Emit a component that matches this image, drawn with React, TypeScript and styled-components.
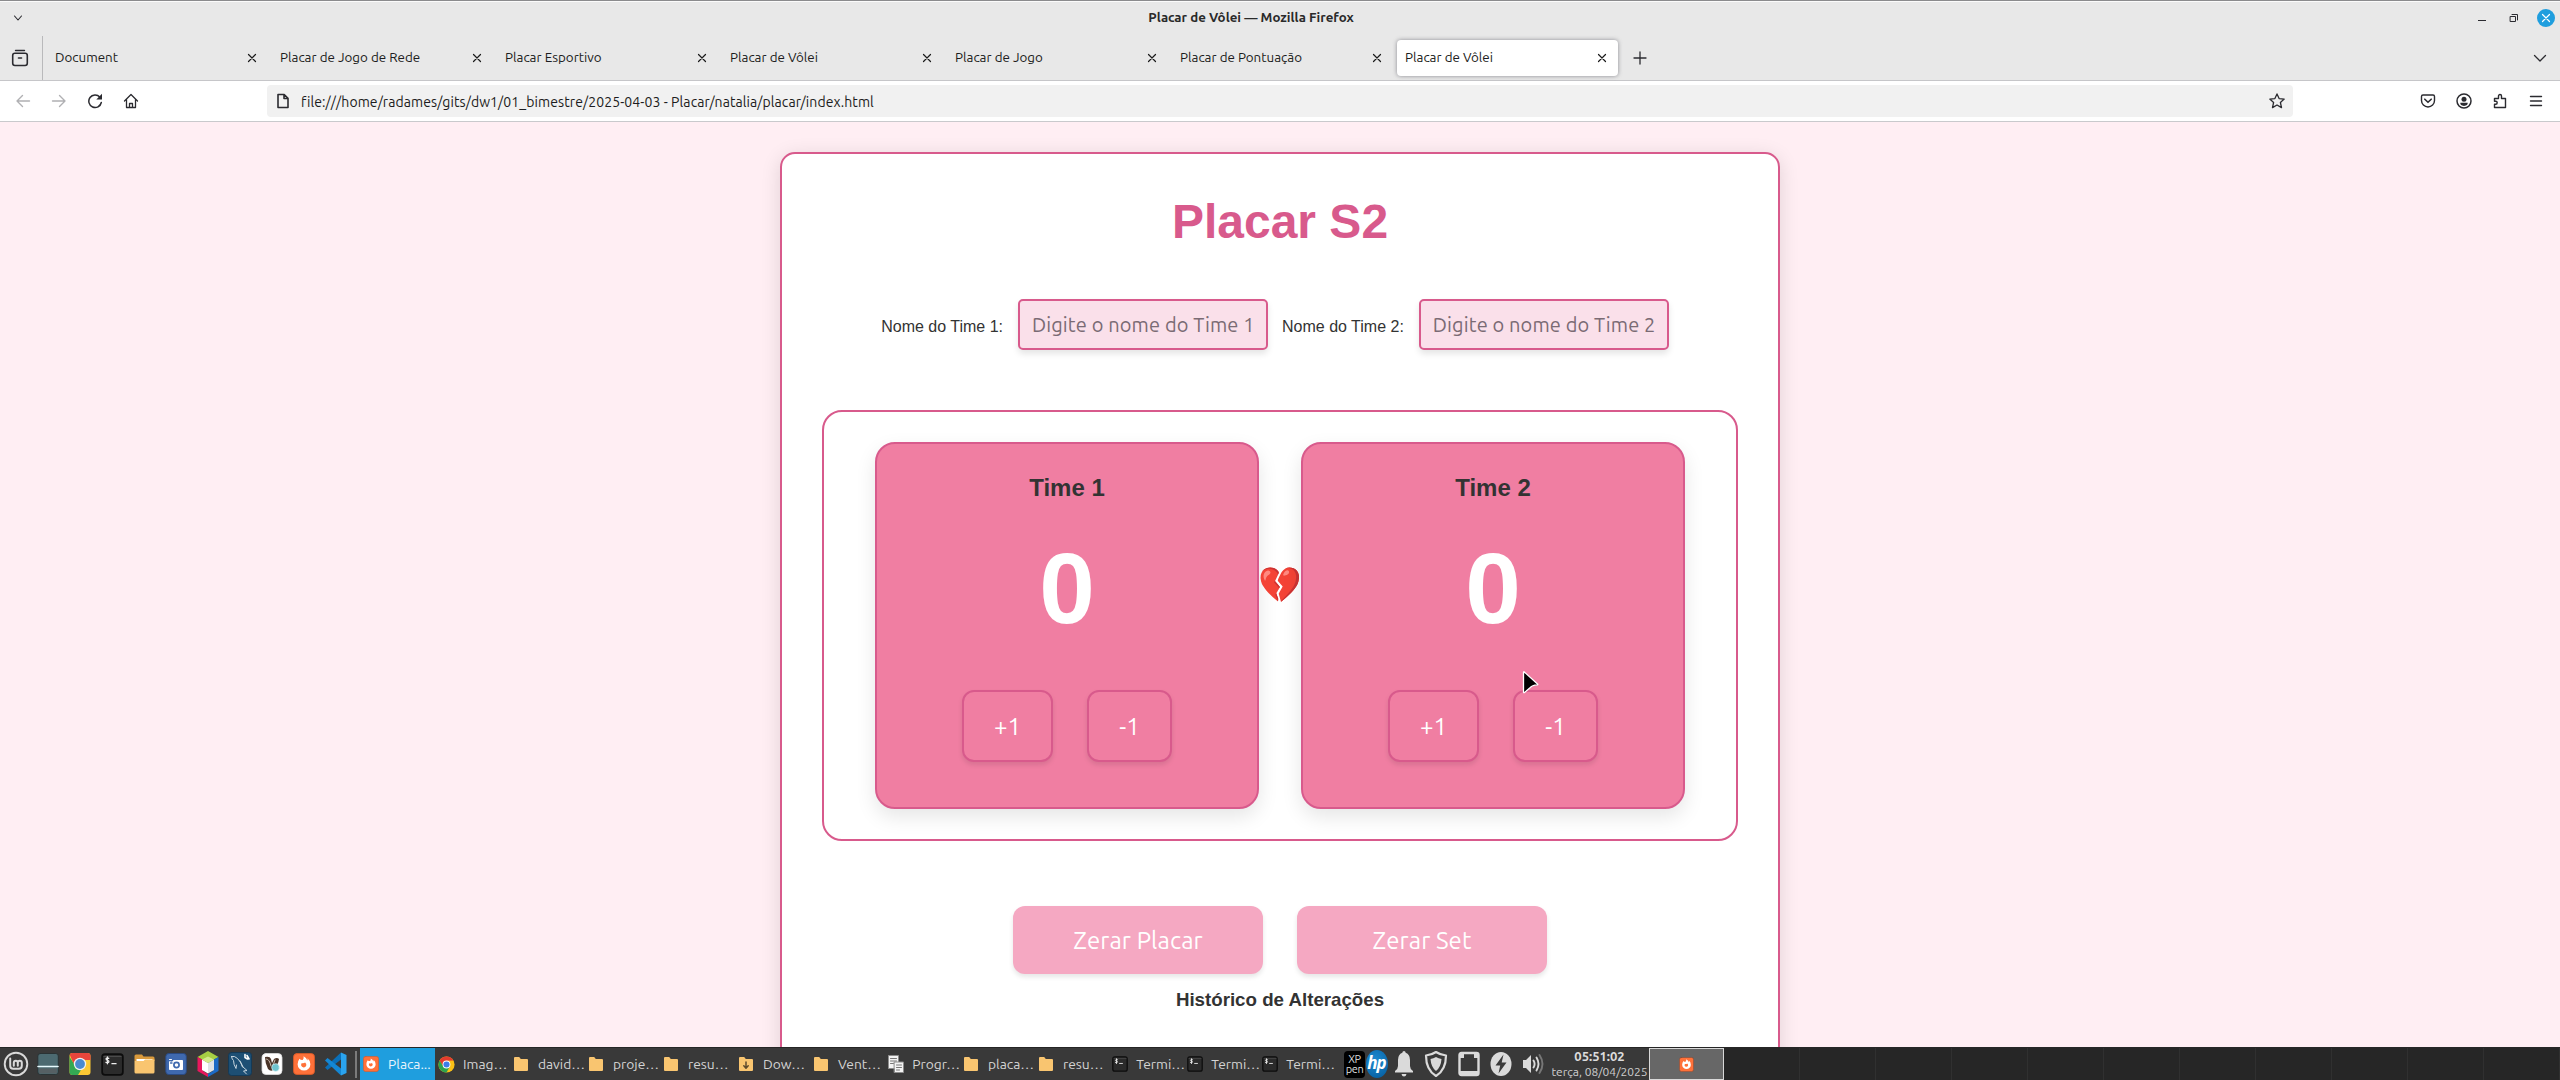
import React, { useState } from "react";
import styled, { createGlobalStyle } from "styled-components";

const ui = `"Ubuntu", "Noto Sans", sans-serif`;
const arial = `"Liberation Sans", Arial, sans-serif`;
const rose = "#d85a8c";

const GlobalStyle = createGlobalStyle`
  * { box-sizing: border-box; }
  body { margin: 0; overflow: hidden; }
  button, input { font: inherit; margin: 0; }
`;

/* ---------- Window ---------- */

const Screen = styled.div`
  display: flex;
  flex-direction: column;
  width: 2560px;
  height: 1080px;
  overflow: hidden;
  font-family: ${ui};
  color: #1c1c20;
  border-top: 1px solid #8b8b8d;
`;

const TitleBar = styled.header`
  display: grid;
  grid-template-columns: 36px 1fr 94px;
  align-items: center;
  height: 35px;
  flex: none;
  padding-bottom: 2px;
  background: #e8e8e8;
  border-top: 1px solid #fbfbfb;
  color: #2a2a2a;
`;

const MenuHandle = styled.span`
  display: flex;
  justify-content: center;
`;

const WindowTitle = styled.h1`
  margin: 0;
  text-align: center;
  font-size: 13.3px;
  font-weight: 600;
  line-height: 18px;
`;

const WindowControls = styled.div`
  display: flex;
  align-items: center;
  gap: 14px;
  padding-left: 7px;
`;

const Control = styled.span<{ $close?: boolean }>`
  display: flex;
  align-items: center;
  justify-content: center;
  width: 18px;
  height: 18px;
  border-radius: 50%;
  background: ${(p) => (p.$close ? "#1f9ede" : "transparent")};
`;

const TabStrip = styled.nav`
  display: flex;
  align-items: center;
  height: 45px;
  flex: none;
  background: #e8e8e8;
  border-bottom: 1px solid #c6c6c9;
`;

const FirefoxView = styled.div`
  display: flex;
  align-items: center;
  justify-content: center;
  align-self: stretch;
  width: 43px;
  padding-right: 2px;
  border-right: 1px solid #b9b9bb;
`;

const Tab = styled.div<{ $active?: boolean }>`
  display: flex;
  align-items: center;
  justify-content: space-between;
  width: 221px;
  height: 36px;
  margin: 0 2px;
  padding: 0 11px 0 8px;
  border-radius: 4px;
  font-size: 13.4px;
  line-height: 18px;
  background: ${(p) => (p.$active ? "#fff" : "transparent")};
  box-shadow: ${(p) => (p.$active ? "0 0 4px rgba(100, 100, 110, 0.7)" : "none")};
`;

const Tabs = styled.div`
  display: flex;
  padding-left: 2px;
`;

const NewTab = styled.span`
  display: flex;
  margin-left: 13px;
`;

const TabList = styled.span`
  display: flex;
  margin-left: auto;
  margin-right: 13px;
`;

const Toolbar = styled.div`
  display: flex;
  align-items: center;
  height: 41px;
  flex: none;
  background: #fff;
  border-bottom: 1px solid #c9c9cc;
`;

const NavButtons = styled.div`
  display: flex;
  align-items: center;
  gap: 20px;
  width: 267px;
  padding-left: 15px;
`;

const AddressBar = styled.div`
  display: flex;
  align-items: center;
  width: 2026px;
  height: 32px;
  padding: 0 8px;
  border-radius: 4px;
  background: #f1f1f1;
`;

const Address = styled.span`
  flex: 1;
  margin-left: 10px;
  padding-top: 1px;
  font-size: 14px;
  line-height: 20px;
  letter-spacing: 0.09px;
`;

const ToolbarActions = styled.div`
  display: flex;
  align-items: center;
  gap: 20px;
  margin-left: 127px;
`;

/* ---------- Page ---------- */

const Page = styled.main`
  flex: 1;
  min-height: 0;
  overflow: hidden;
  padding-top: 30px;
  background: #ffeef3;
  font-family: ${arial};
  color: #333;
`;

const Board = styled.section`
  width: 1000px;
  height: 1100px;
  margin: 0 auto;
  padding: 40px;
  border: 2px solid ${rose};
  border-radius: 15px;
  background: #fff;
  box-shadow: 0 4px 20px rgba(0, 0, 0, 0.12);
`;

const Heading = styled.h1`
  margin: 0 0 49px;
  text-align: center;
  font-size: 48px;
  line-height: 56px;
  color: ${rose};
`;

const NamesRow = styled.div`
  display: flex;
  align-items: baseline;
  justify-content: center;
  gap: 14px;
  padding-right: 10px;
`;

const Field = styled.label`
  display: flex;
  align-items: baseline;
  gap: 15px;
  font-size: 16px;
  line-height: 20px;
`;

const NameInput = styled.input`
  width: 250px;
  height: 51px;
  padding: 0 12px;
  border: 2px solid ${rose};
  border-radius: 5px;
  outline: none;
  background: #fae0ea;
  box-shadow: 0 4px 6px rgba(0, 0, 0, 0.1);
  font-family: ${ui};
  font-size: 20px;
  letter-spacing: 0.13px;
  color: #333;
  &::placeholder {
    color: #7a6b74;
    opacity: 1;
  }
`;

const Scoreboard = styled.div`
  display: flex;
  align-items: center;
  justify-content: center;
  height: 431px;
  margin-top: 60px;
  border: 2px solid ${rose};
  border-radius: 20px;
`;

const TeamCard = styled.article`
  display: flex;
  flex-direction: column;
  align-items: center;
  width: 384px;
  height: 367px;
  padding-top: 30px;
  border: 2px solid ${rose};
  border-radius: 20px;
  background: #f07ea2;
  box-shadow: 0 8px 20px rgba(0, 0, 0, 0.1);
`;

const TeamName = styled.h2`
  margin: 0;
  font-size: 24px;
  line-height: 28px;
`;

const Score = styled.div`
  margin: 31px 0 47px;
  font-size: 100px;
  font-weight: 700;
  line-height: 110px;
  color: #fff;
`;

const ScoreActions = styled.div`
  display: flex;
  gap: 34px;
`;

const ScoreButton = styled.button<{ $width: number }>`
  width: ${(p) => p.$width}px;
  height: 72px;
  padding: 0;
  border: 2px solid ${rose};
  border-radius: 12px;
  background: #f07ea2;
  box-shadow: 0 3px 5px rgba(0, 0, 0, 0.1);
  font-family: ${ui};
  font-size: 24px;
  color: #fff;
`;

const Heart = styled.div`
  display: flex;
  justify-content: center;
  width: 42px;
  margin-top: -79px;
  font-family: "Noto Color Emoji", sans-serif;
  font-size: 35px;
  line-height: 42px;
  white-space: nowrap;
`;

const ResetRow = styled.div`
  display: flex;
  justify-content: center;
  gap: 34px;
  margin-top: 65px;
`;

const ResetButton = styled.button`
  width: 250px;
  height: 68px;
  border: none;
  border-radius: 12px;
  background: #f5a8c2;
  box-shadow: 0 3px 5px rgba(0, 0, 0, 0.1);
  font-family: ${ui};
  font-size: 24px;
  letter-spacing: 0.1px;
  color: #fff;
`;

const HistoryTitle = styled.h3`
  margin: 15px 0 0;
  text-align: center;
  font-size: 18.72px;
  line-height: 22px;
`;

/* ---------- Taskbar ---------- */

const Taskbar = styled.footer`
  display: flex;
  height: 33px;
  flex: none;
  border-top: 1px solid #262626;
  background: #262626;
`;

const Panel = styled.div`
  display: flex;
  align-items: center;
  width: 1650px;
  background: #393939;
`;

const Launchers = styled.div`
  display: flex;
  align-items: center;
  width: 360px;
  height: 100%;
`;

const Launcher = styled.span`
  display: flex;
  justify-content: center;
  width: 32px;
`;

const Divider = styled.i`
  width: 2px;
  height: 27px;
  margin-left: 3px;
  background: #7b7b7b;
`;

const Task = styled.div<{ $active?: boolean }>`
  display: flex;
  align-items: center;
  width: 75px;
  height: 100%;
  padding-left: 2px;
  font-size: 13.8px;
  line-height: 20px;
  white-space: nowrap;
  color: ${(p) => (p.$active ? "#e9f4fb" : "#d4d4d4")};
  background: ${(p) => (p.$active ? "#1f9ede" : "transparent")};
`;

const TaskIcon = styled.span`
  display: flex;
  justify-content: center;
  width: 18px;
  margin-right: 8px;
`;

const Tray = styled.div`
  display: flex;
  align-items: center;
  width: 215px;
  padding-left: 9px;
`;

const TrayItem = styled.span<{ $width: number }>`
  display: flex;
  justify-content: center;
  width: ${(p) => p.$width}px;
`;

const XpPen = styled.span`
  display: flex;
  flex-direction: column;
  align-items: center;
  justify-content: center;
  width: 21px;
  height: 27px;
  border-radius: 4px;
  background: #000;
  font-size: 11px;
  line-height: 10px;
  letter-spacing: -0.4px;
  color: #ddd;
`;

const HpLogo = styled.span`
  display: flex;
  align-items: center;
  justify-content: center;
  width: 22px;
  height: 28px;
  padding-bottom: 3px;
  border-radius: 50%;
  background: radial-gradient(circle at 40% 35%, #1c8ad0, #045a9c);
  font: italic 700 17px/20px "Open Sans", sans-serif;
  letter-spacing: -1px;
  color: #fff;
`;

const Clock = styled.time`
  width: 99px;
  text-align: center;
  white-space: nowrap;
  font-size: 12px;
  line-height: 15px;
  color: #cfcfcf;
`;

const ClockTime = styled.strong`
  display: block;
  font-size: 13px;
  color: #dcdcdc;
`;

const Workspaces = styled.div`
  display: flex;
  flex: 1;
`;

const Workspace = styled.div<{ $active?: boolean }>`
  display: flex;
  align-items: center;
  justify-content: center;
  width: ${(p) => (p.$active ? 75 : 76)}px;
  flex: none;
  background: ${(p) => (p.$active ? "#676767" : "transparent")};
  border: solid ${(p) => (p.$active ? "#d9d9d9" : "#303030")};
  border-width: ${(p) => (p.$active ? "1px" : "0 1px 0 0")};
`;

const Pointer = styled.svg`
  position: absolute;
  left: 1521px;
  top: 670px;
`;

/* ---------- Icons ---------- */

type IconProps = { size?: number; color?: string; children: React.ReactNode; w?: number; box?: string };
const Icon = ({ size = 16, w, box, color = "#2b2b30", children }: IconProps) => (
  <svg width={w ?? size} height={size} viewBox={box ?? `0 0 ${w ?? size} ${size}`} fill="none" stroke={color} strokeWidth={1.4} strokeLinecap="round" strokeLinejoin="round">
    {children}
  </svg>
);

const Cross = () => <Icon size={10} color="#1a1a1a"><path d="M1.5 1.5l7 7M8.5 1.5l-7 7" strokeWidth={1.2} /></Icon>;

const Folder = ({ down }: { down?: boolean }) => (
  <Icon size={16} w={14} color="none">
    <path d="M0 2q0-1 1-1h4.2l1.6 2H13q1 0 1 1v10q0 1-1 1H1q-1 0-1-1z" fill="#f9c570" />
    {down && <path d="M7 6v6M4.8 9.8L7 12.2l2.2-2.4" stroke="#5d4a2c" strokeWidth={1.5} />}
  </Icon>
);

const Terminal = ({ size = 16 }: { size?: number }) => (
  <Icon size={size} box="0 0 20 20">
    <rect x={1} y={1} width={18} height={18} rx={2.5} fill="#2b2b2b" stroke="#0c0c0c" strokeWidth={1.5} />
    <path d="M2.5 3h15" stroke="#4b4b4b" strokeWidth={1} />
    <path d="M6.8 4.6q-2.4-.8-2.4.6 0 1 1.3 1.2 1.3.3 1.2 1.3-.3 1.2-2.6.4M5.6 3.4v6M9.5 9.3h3.6" stroke="#eee" strokeWidth={1.1} />
  </Icon>
);

const Firefox = ({ size = 16, light }: { size?: number; light?: boolean }) => (
  <Icon size={size} box="0 0 20 20">
    <rect x={0.5} y={0.5} width={19} height={19} rx={3} fill="#ff7139" stroke={light ? "#7a4a3a" : "#d95a28"} strokeWidth={0.8} />
    <path d="M6 5.2q-1.8 2-1.8 5a5.8 5.8 0 0 0 11.6 0q0-3.3-2.7-5.4.4 1.2 0 2.1Q12.2 4.2 9.6 3q.5 1.9-.8 3.3Q6.8 6.5 6 5.2z" fill="#fff" stroke="none" />
    <path d="M8 9.2q1.5.6 3-.5 1.6 1.2 1 3a2.5 2.5 0 0 1-4.6-.3q-.2-1.2.6-2.2z" fill="#ff7139" stroke="none" />
  </Icon>
);

const ChromeMark = () => (
  <Icon size={17} box="0 0 20 20" color="none">
    <circle cx={10} cy={10} r={9.5} fill="#fbc116" />
    <path d="M1.8 5.25A9.5 9.5 0 0 1 18.2 5.25L10 5.5 6 12.3z" fill="#e33b2e" />
    <path d="M1.8 5.25A9.5 9.5 0 0 0 10 19.5l4-7.2-8-.2z" fill="#2da44e" />
    <circle cx={10} cy={10} r={4.6} fill="#fff" />
    <circle cx={10} cy={10} r={3.6} fill="#3d7de8" />
  </Icon>
);

const ChromeSquare = () => (
  <Icon size={22} box="0 0 22 22" color="none">
    <clipPath id="chrome-sq"><rect x={0.5} y={0} width={21} height={22} rx={3} /></clipPath>
    <g clipPath="url(#chrome-sq)">
      <path d="M0 0h22v22H0z" fill="#fcc934" />
      <path d="M0 0h22v7H11l-5 7z" fill="#e8453c" />
      <path d="M0 3l7 11 5 3-3 5H0z" fill="#34a853" />
    </g>
    <circle cx={11} cy={11} r={6.2} fill="#f3f3f3" />
    <circle cx={11} cy={11} r={4.9} fill="#4a8ad0" />
  </Icon>
);

const launchers: React.ReactNode[] = [
  <Icon size={26} color="#d9d9d9">
    <circle cx={13} cy={13} r={11.3} strokeWidth={1.9} />
    <path d="M7.2 7.5v7.3q0 3 3 3h5.6q3 0 3-3v-3a2 2 0 0 0-4 0v3M14.800 11.8a2 2 0 0 0-4 0v3" strokeWidth={2} />
  </Icon>,
  <Icon size={22}>
    <rect x={0.8} y={0.5} width={20.5} height={21} rx={2.5} fill="#4c6a71" stroke="#2a3335" strokeWidth={1} />
    <path d="M1 13.5h20" stroke="#e9fbff" strokeWidth={1.6} />
    <path d="M2 15.5h18v4q0 1-1 1H3q-1 0-1-1z" fill="#566064" stroke="none" />
  </Icon>,
  <ChromeSquare />,
  <Terminal size={23} />,
  <Icon size={20} w={21} color="none">
    <path d="M.5 2q0-1.500 1.500-1.500h6l1.500 2H19q1.500 0 1.500 1.500v3H.5z" fill="#d99a3c" />
    <path d="M2.500 5h16v4h-16z" fill="#fff" />
    <path d="M.5 7h9l1.500-1.500h9.500V18q0 1.500-1.500 1.500H2Q.5 19.500.5 18z" fill="#f9c570" />
  </Icon>,
  <Icon size={22}>
    <rect x={0.8} y={0.5} width={20.5} height={21} rx={3} fill="#3f69ae" stroke="#2b4a80" strokeWidth={1} />
    <path d="M4.500 6.500h2M4.500 9v7.500h13V7.500h-9l-1 1.500z" fill="#fff" stroke="#fff" strokeWidth={1} />
    <circle cx={11.500} cy={12} r={2.600} stroke="#3f69ae" strokeWidth={1.700} />
    <path d="M5.500 10h1.500" stroke="#3f69ae" />
  </Icon>,
  <Icon size={26} w={22} color="none">
    <path d="M11 0l10.500 6L11 12 .5 6z" fill="#a7cf43" />
    <path d="M.5 6L6 9v11l5 3v3L.5 20z" fill="#e8175d" />
    <path d="M21.500 6L16 9v11l-5 3v3l10.500-6z" fill="#1b6ac6" />
    <path d="M5 8.500l6 3.500v10.500L5 19z" fill="#fff" />
    <path d="M17 8.500L11 12v10.500l6-3.500z" fill="#dfe3e6" />
    <path d="M11 5.500l6 3-6 3.500-6-3.500z" fill="#d4ea8c" />
  </Icon>,
  <Icon size={24} color="#c8d6df">
    <rect x={0.5} y={0.5} width={23} height={23} rx={3} fill="#1d4f74" stroke="#143a57" strokeWidth={1} />
    <path d="M3.500 4.500q3-1 6 2 4 4 5.500 8.500l4 3.500-3.500.5 3 3M3.500 4.500q.5 3 2 4 0 4 2.500 8l.5-3.500M12 9l2.500 6" strokeWidth={1} />
    <path d="M17 2.500v3l2.500 1.500M19 3.500l2 3.500" stroke="#fff" strokeWidth={1.6} />
  </Icon>,
  <Icon size={22}>
    <rect x={1} y={0.5} width={20} height={21} rx={4} fill="#fff" stroke="#ddd" strokeWidth={0.8} />
    <path d="M4 4q5-1 6 2l1 4 2-4q3-2 5 0-1 7-5 10.500-3 2.500-6-.5Q4 10 4 4z" fill="#4a3428" stroke="none" />
    <path d="M5.500 6q3 0 4.500 7M14 7q-2 4-2 7" stroke="#cdbcb0" strokeWidth={1} />
    <circle cx={14.5} cy={14.5} r={3.8} fill="#6fc4cf" stroke="#d8f0f3" strokeWidth={0.7} />
  </Icon>,
  <Firefox size={22} />,
  <Icon size={24} color="none">
    <path d="M17 .5l5.500 2.500v18L17 23.500z" fill="#2aa3ee" />
    <path d="M17 .5L1 15.500l2.500 2.500L17 7.500z" fill="#0a6fb8" />
    <path d="M17 23.500L1 8.500 3.500 6 17 16.500z" fill="#1487d4" />
  </Icon>,
];

const tasks: { label: string; icon: React.ReactNode }[] = [
  { label: "Placa...", icon: <Firefox size={16} /> },
  { label: "Imag…", icon: <ChromeMark /> },
  { label: "david…", icon: <Folder /> },
  { label: "proje…", icon: <Folder /> },
  { label: "resu…", icon: <Folder /> },
  { label: "Dow…", icon: <Folder down /> },
  { label: "Vent…", icon: <Folder /> },
  {
    label: "Progr…",
    icon: (
      <Icon size={18} w={16}>
        <rect x={0.5} y={0.5} width={10} height={13} fill="#f3f3f3" stroke="#8c8c8c" strokeWidth={1} />
        <path d="M2.500 3.500h6M2.500 6h6M2.500 8.500h3" stroke="#777" strokeWidth={1} />
        <rect x={6.5} y={7} width={9} height={10.5} fill="#f3f3f3" stroke="#8c8c8c" strokeWidth={1} />
        <path d="M8.500 10h5M8.500 12.500h5M8.500 15h3" stroke="#777" strokeWidth={1} />
      </Icon>
    ),
  },
  { label: "placa…", icon: <Folder /> },
  { label: "resu…", icon: <Folder /> },
  { label: "Termi…", icon: <Terminal /> },
  { label: "Termi…", icon: <Terminal /> },
  { label: "Termi…", icon: <Terminal /> },
];

const tabs = ["Document", "Placar de Jogo de Rede", "Placar Esportivo", "Placar de Vôlei", "Placar de Jogo", "Placar de Pontuação", "Placar de Vôlei"];

/* ---------- Application ---------- */

function Team({ name }: { name: string }) {
  const [score, setScore] = useState(0);
  return (
    <TeamCard>
      <TeamName>{name}</TeamName>
      <Score>{score}</Score>
      <ScoreActions>
        <ScoreButton $width={91} onClick={() => setScore(score + 1)}>+1</ScoreButton>
        <ScoreButton $width={85} onClick={() => setScore(Math.max(0, score - 1))}>-1</ScoreButton>
      </ScoreActions>
    </TeamCard>
  );
}

function Browser() {
  return (
    <>
      <TitleBar>
        <MenuHandle><Icon size={10}><path d="M1.5 3L5 7l3.5-4" strokeWidth={1.1} /></Icon></MenuHandle>
        <WindowTitle>Placar de Vôlei — Mozilla Firefox</WindowTitle>
        <WindowControls>
          <Control><Icon size={10}><path d="M1 7.5h8" strokeWidth={1} strokeLinecap="butt" /></Icon></Control>
          <Control><Icon size={10}><path d="M1.5 3.5h5v5h-5zM3 1.5h5.500V7" strokeWidth={1} strokeLinejoin="miter" /></Icon></Control>
          <Control $close><Icon size={10} color="#fff"><path d="M1.5 1.5l7 7M8.5 1.5l-7 7" strokeWidth={1.2} /></Icon></Control>
        </WindowControls>
      </TitleBar>
      <TabStrip>
        <FirefoxView>
          <Icon size={18}>
            <path d="M4.500 1.500h9" />
            <rect x={1.7} y={4.2} width={14.6} height={12.3} rx={2.2} strokeWidth={1.6} />
            <path d="M7.500 9h3" strokeWidth={1.6} />
          </Icon>
        </FirefoxView>
        <Tabs>
          {tabs.map((title, i) => (
            <Tab key={i} $active={i === tabs.length - 1}>
              {title}
              <Cross />
            </Tab>
          ))}
        </Tabs>
        <NewTab><Icon size={14}><path d="M7 1v12M1 7h12" strokeWidth={1.3} /></Icon></NewTab>
        <TabList><Icon size={14}><path d="M1.500 4.500L7 10l5.500-5.500" strokeWidth={1.3} /></Icon></TabList>
      </TabStrip>
      <Toolbar>
        <NavButtons>
          <Icon color="#b0b0b3"><path d="M14.500 8H2M7.500 2.500L2 8l5.500 5.500" /></Icon>
          <Icon color="#b0b0b3"><path d="M1.500 8H14M8.500 2.500L14 8l-5.500 5.500" /></Icon>
          <Icon>
            <path d="M14.300 9.500A6.300 6.300 0 1 1 12.800 4" strokeWidth={1.5} />
            <path d="M15 .8v5.700H9.300z" fill="#2b2b30" stroke="none" />
          </Icon>
          <Icon><path d="M1.500 8L8 1.500 14.500 8M3.500 6.500v8h9v-8M6.500 14.500v-4h3v4" strokeWidth={1.3} /></Icon>
        </NavButtons>
        <AddressBar>
          <Icon><path d="M3 1.500h6.200L13 5.300v9.200H3zM9 1.500v4h4" strokeWidth={1.6} /></Icon>
          <Address>file:///home/radames/gits/dw1/01_bimestre/2025-04-03 - Placar/natalia/placar/index.html</Address>
          <Icon><path d="M8 .9l2.100 4.700 5.100.5-3.800 3.400 1.100 5.100L8 12l-4.500 2.600 1.100-5.100L.8 6.100l5.100-.5z" strokeWidth={1.3} /></Icon>
        </AddressBar>
        <ToolbarActions>
          <Icon>
            <path d="M3 2h10q1.500 0 1.500 1.500v4a6.500 6.500 0 0 1-13 0v-4Q1.500 2 3 2z" />
            <path d="M4.800 6.200L8 9.300l3.200-3.100" strokeWidth={1.6} />
          </Icon>
          <Icon>
            <circle cx={8} cy={8} r={7} strokeWidth={1.5} />
            <circle cx={8} cy={6.2} r={2.5} fill="#2b2b30" stroke="none" />
            <path d="M4.300 9.800h7.400q.3 2.700-3.700 3.200-4-.5-3.700-3.200z" fill="#2b2b30" stroke="none" />
          </Icon>
          <Icon><path d="M2.500 5.500h4V3a1.500 1.500 0 0 1 3 0v2.500h4v9h-11v-3.300h1.200a1.500 1.500 0 0 0 0-3H2.500z" strokeWidth={1.4} /></Icon>
          <Icon><path d="M2.500 3.500h11M2.500 8h11M2.500 12.500h11" /></Icon>
        </ToolbarActions>
      </Toolbar>
    </>
  );
}

export default function App() {
  return (
    <Screen>
      <GlobalStyle />
      <Browser />
      <Page>
        <Board>
          <Heading>Placar S2</Heading>
          <NamesRow>
            <Field>Nome do Time 1:<NameInput placeholder="Digite o nome do Time 1" /></Field>
            <Field>Nome do Time 2:<NameInput placeholder="Digite o nome do Time 2" /></Field>
          </NamesRow>
          <Scoreboard>
            <Team name="Time 1" />
            <Heart>💔</Heart>
            <Team name="Time 2" />
          </Scoreboard>
          <ResetRow>
            <ResetButton>Zerar Placar</ResetButton>
            <ResetButton>Zerar Set</ResetButton>
          </ResetRow>
          <HistoryTitle>Histórico de Alterações</HistoryTitle>
        </Board>
      </Page>
      <Taskbar>
        <Panel>
          <Launchers>
            {launchers.map((icon, i) => <Launcher key={i}>{icon}</Launcher>)}
            <Divider />
          </Launchers>
          {tasks.map((task, i) => (
            <Task key={i} $active={i === 0}>
              <TaskIcon>{task.icon}</TaskIcon>
              {task.label}
            </Task>
          ))}
          <Tray>
            <TrayItem $width={21}><XpPen><span>XP</span><span>pen</span></XpPen></TrayItem>
            <TrayItem $width={23}><HpLogo>hp</HpLogo></TrayItem>
            <TrayItem $width={31}>
              <Icon size={26} w={20} color="none">
                <path d="M10 0q1.500 0 1.700 1.800Q16 3.500 16 9v6q0 3 3 5v1.500H1V20q3-2 3-5V9q0-5.500 4.300-7.200Q8.500 0 10 0zM7.500 23h5q-.5 2.500-2.500 2.500T7.500 23z" fill="#dadada" />
              </Icon>
            </TrayItem>
            <TrayItem $width={34}>
              <Icon size={28} w={24} color="#dadada">
                <path d="M12 2q4.500 3 10 3.500Q22 20 12 26 2 20 2 5.500 7.500 5 12 2z" strokeWidth={2.2} />
                <path d="M12 7q2.500 1.700 5.500 2-.5 8-5.500 12-5-4-5.500-12 3-.3 5.500-2z" fill="#dadada" stroke="none" />
              </Icon>
            </TrayItem>
            <TrayItem $width={32}>
              <Icon size={26} w={22} color="#dadada">
                <path d="M3.500 2h15Q20.500 2 20.500 4v18q0 2-2 2h-15q-2 0-2-2V4q0-2 2-2z" strokeWidth={2.4} />
                <path d="M2 3h4v4H2zM16 3h4v4h-4zM2 20h18v3H2z" fill="#dadada" stroke="none" />
              </Icon>
            </TrayItem>
            <TrayItem $width={32}>
              <Icon size={26} w={22} color="none">
                <ellipse cx={11} cy={13} rx={10.5} ry={12} fill="#dadada" />
                <path d="M13.500 3.500L5.500 14.500h4.700L8.500 22.500l8-11h-4.800z" fill="#393939" />
              </Icon>
            </TrayItem>
            <TrayItem $width={32}>
              <Icon size={24} w={22} color="#dadada">
                <path d="M1 8h3l5-5v18l-5-5H1z" fill="#dadada" stroke="none" />
                <path d="M11.500 8.500q2.200 3.500 0 7M14.500 5.500q4 6.500 0 13" strokeWidth={1.9} />
                <path d="M17.500 3q6 9 0 18" stroke="#777" strokeWidth={1.9} />
              </Icon>
            </TrayItem>
          </Tray>
          <Clock>
            <ClockTime>05:51:02</ClockTime>
            terça, 08/04/2025
          </Clock>
        </Panel>
        <Workspaces>
          <Workspace $active><Firefox size={15} light /></Workspace>
          {Array.from({ length: 11 }, (_, i) => <Workspace key={i} />)}
        </Workspaces>
      </Taskbar>
      <Pointer width={19} height={25} viewBox="0 0 19 25">
        <path d="M2.500 2.200q0-.8.7-.3L16.500 14q.8.8-.3.900-5 .2-7.500 3.200L3.500 22.500q-1 .5-1-.5z" fill="#000" stroke="#fff" strokeWidth={1.3} />
      </Pointer>
    </Screen>
  );
}
